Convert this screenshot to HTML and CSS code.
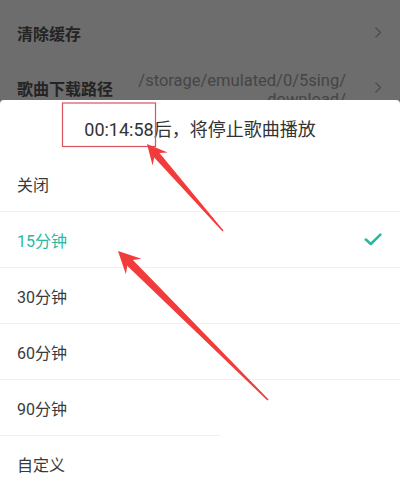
FILE: index.html
```html
<!DOCTYPE html>
<html lang="zh-CN">
<head>
<meta charset="utf-8">
<title>定时停止播放</title>
<link rel="stylesheet" href="styles.css">
</head>
<body>
<div class="screen">
  <div class="settings">
    <div class="setting-row">
      <span class="setting-label">清除缓存</span>
      <svg class="chevron" width="8" height="13" viewBox="0 0 8 13"><path d="M1.5 1.5 L6.5 6.5 L1.5 11.5" fill="none" stroke="#505050" stroke-width="1.5"/></svg>
    </div>
    <div class="setting-row">
      <span class="setting-label">歌曲下载路径</span>
      <span class="setting-value">/storage/emulated/0/5sing/<br>download/</span>
      <svg class="chevron" width="8" height="13" viewBox="0 0 8 13"><path d="M1.5 1.5 L6.5 6.5 L1.5 11.5" fill="none" stroke="#505050" stroke-width="1.5"/></svg>
    </div>
  </div>

  <div class="sheet">
    <div class="sheet-title">00:14:58后，将停止歌曲播放</div>
    <ul class="options">
      <li class="option">关闭</li>
      <li class="option is-selected">15分钟
        <svg class="check" width="18" height="13" viewBox="0 0 18 13"><path d="M1.8 6.6 L6.8 11 L16.4 1.6" fill="none" stroke="#2bb8a2" stroke-width="2.6" stroke-linecap="round" stroke-linejoin="round"/></svg>
      </li>
      <li class="option">30分钟</li>
      <li class="option">60分钟</li>
      <li class="option option-short">90分钟</li>
      <li class="option">自定义</li>
    </ul>
  </div>

  <svg class="annotations" width="400" height="487" viewBox="0 0 400 487">
    <rect x="62.5" y="103" width="93" height="43.5" fill="none" stroke="#d9535f" stroke-width="1.2"/>
    <polygon fill="#f23b3b" points="147,144 167.7,152.5 159.5,153 223.5,230.5 222.5,231.5 154.2,157.6 152.6,165.6"/>
    <polygon fill="#f23b3b" points="118,251 141.4,258.7 132.9,260.1 268.6,399.4 267.4,400.6 127.2,265.8 125.9,274.3"/>
  </svg>
</div>
</body>
</html>
```

FILE: styles.css
```css
html, body {
  margin: 0;
  padding: 0;
}

body {
  font-family: Roboto, "Noto Sans CJK SC", sans-serif;
  background: #6d6d6d;
}

.screen {
  position: relative;
  width: 400px;
  height: 487px;
  overflow: hidden;
  display: flex;
  flex-direction: column;
}

/* dimmed settings list behind the sheet */
.settings {
  flex: 0 0 100px;
  height: 100px;
  overflow: hidden;
  padding-top: 5px;
  box-sizing: border-box;
  background: #6d6d6d;
}

.setting-row {
  height: 55px;
  display: flex;
  align-items: center;
  padding: 0 18px 0 17px;
}

.setting-label {
  font-size: 16px;
  font-weight: 700;
  color: #242424;
  white-space: nowrap;
}

.setting-value {
  flex: 1;
  text-align: right;
  font-size: 16.5px;
  line-height: 19px;
  color: #454545;
  padding-top: 4px;
  margin-right: 28px;
  white-space: nowrap;
}

.chevron {
  margin-left: auto;
  flex: 0 0 auto;
}

.setting-value + .chevron {
  margin-left: 0;
}

/* bottom sheet */
.sheet {
  flex: 1 0 auto;
  background: #ffffff;
  border-radius: 4px 4px 0 0;
}

.sheet-title {
  height: 56px;
  display: flex;
  align-items: center;
  justify-content: center;
  font-size: 18px;
  color: #333333;
}

.options {
  list-style: none;
  margin: 0;
  padding: 0;
}

.option {
  position: relative;
  height: 56px;
  display: flex;
  align-items: center;
  padding: 0 17px;
  font-size: 16px;
  color: #3a3a3a;
  border-bottom: 1px solid #f0f0f0;
  box-sizing: border-box;
}

.option-short {
  border-bottom: none;
}

.option-short::after {
  content: "";
  position: absolute;
  left: 0;
  bottom: 0;
  width: 220px;
  height: 1px;
  background: #f0f0f0;
}

.option.is-selected {
  color: #2bb8a2;
  justify-content: space-between;
}

.check {
  margin-right: 1px;
}

.annotations {
  position: absolute;
  left: 0;
  top: 0;
  pointer-events: none;
}
```
